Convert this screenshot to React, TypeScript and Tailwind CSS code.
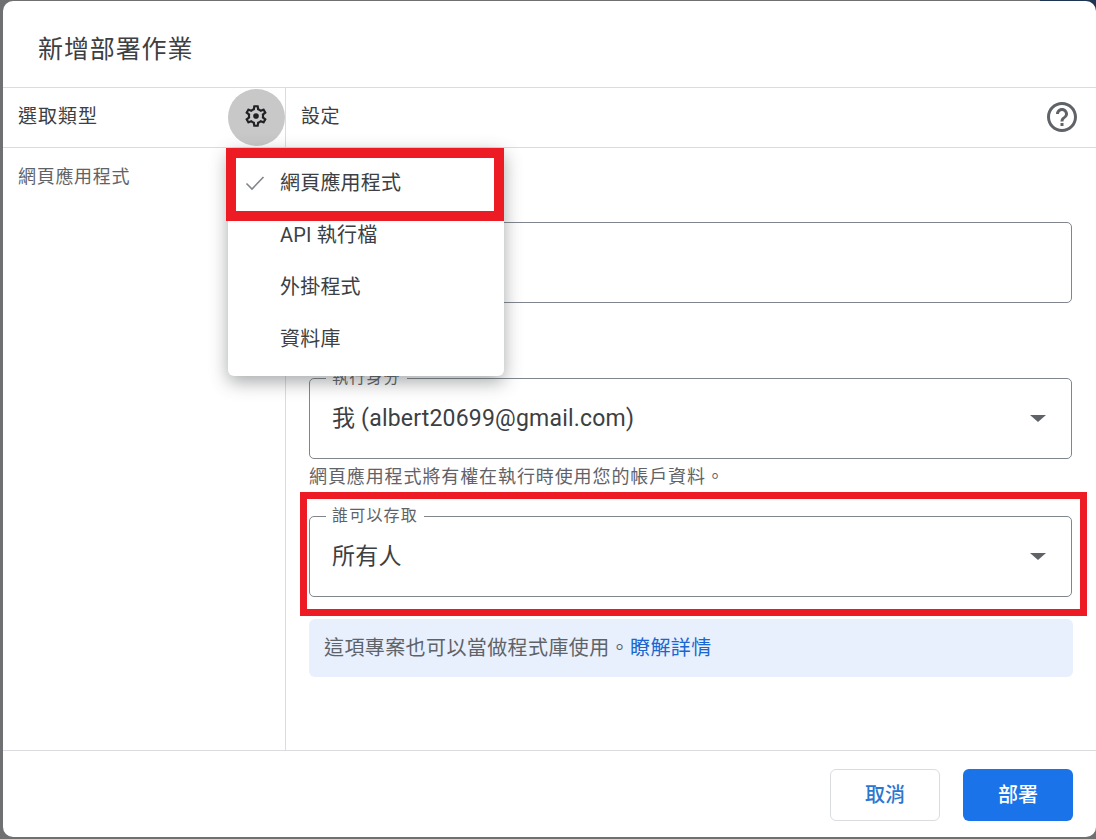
const menuItems = ['網頁應用程式', 'API 執行檔', '外掛程式', '資料庫'];

function GearIcon() {
  return (
    <svg viewBox="0 0 24 24" className="w-[26px] h-[26px]" fill="#202124">
      <path d="M19.43 12.98c.04-.32.07-.64.07-.98 0-.34-.03-.66-.07-.98l2.11-1.65c.19-.15.24-.42.12-.64l-2-3.46c-.09-.16-.26-.25-.44-.25-.06 0-.12.01-.17.03l-2.49 1c-.52-.4-1.08-.73-1.69-.98l-.38-2.65C14.46 2.18 14.25 2 14 2h-4c-.25 0-.46.18-.49.42l-.38 2.65c-.61.25-1.17.59-1.69.98l-2.49-1c-.06-.02-.12-.03-.18-.03-.17 0-.34.09-.43.25l-2 3.46c-.13.22-.07.49.12.64l2.11 1.65c-.04.32-.07.65-.07.98 0 .33.03.66.07.98l-2.11 1.65c-.19.15-.24.42-.12.64l2 3.46c.09.16.26.25.44.25.06 0 .12-.01.17-.03l2.49-1c.52.4 1.08.73 1.69.98l.38 2.65c.03.24.24.42.49.42h4c.25 0 .46-.18.49-.42l.38-2.65c.61-.25 1.17-.59 1.69-.98l2.49 1c.06.02.12.03.18.03.17 0 .34-.09.43-.25l2-3.46c.12-.22.07-.49-.12-.64l-2.11-1.65zm-1.98-1.71c.04.31.05.52.05.73 0 .21-.02.43-.05.73l-.14 1.13.89.7 1.08.84-.7 1.21-1.27-.51-1.04-.42-.9.68c-.43.32-.84.56-1.25.73l-1.06.43-.16 1.13-.2 1.35h-1.4l-.19-1.35-.16-1.13-1.06-.43c-.43-.18-.83-.41-1.23-.71l-.91-.7-1.06.43-1.27.51-.7-1.21 1.08-.84.89-.7-.14-1.13c-.03-.31-.05-.54-.05-.74s.02-.43.05-.73l.14-1.13-.89-.7-1.08-.84.7-1.21 1.27.51 1.04.42.9-.68c.43-.32.84-.56 1.25-.73l1.06-.43.16-1.13.2-1.35h1.39l.19 1.35.16 1.13 1.06.43c.43.18.83.41 1.23.71l.91.7 1.06-.43 1.27-.51.7 1.21-1.07.85-.89.7.14 1.13z" />
      <circle cx="12" cy="12" r="2.6" />
    </svg>
  );
}

function HelpIcon() {
  return (
    <svg viewBox="0 0 24 24" className="w-9 h-9" fill="#5f6368">
      <path d="M11 18h2v-2h-2v2zm1-16C6.48 2 2 6.48 2 12s4.48 10 10 10 10-4.48 10-10S17.52 2 12 2zm0 18c-4.41 0-8-3.59-8-8s3.59-8 8-8 8 3.59 8 8-3.59 8-8 8zm0-14c-2.21 0-4 1.79-4 4h2c0-1.1.9-2 2-2s2 .9 2 2c0 2-3 1.75-3 5h2c0-2.25 3-2.5 3-5 0-2.21-1.79-4-4-4z" />
    </svg>
  );
}

function SelectField({ label, value }: { label: string; value: string }) {
  return (
    <div className="relative h-[81px] border border-[#80868b] rounded-[5px] flex items-center justify-between pl-[22px] pr-[25px]">
      <span className="absolute -top-[9px] left-[16px] bg-white px-[6px] text-[16px] leading-4 tracking-[1.2px] text-[#5f6368]">{label}</span>
      <span className="text-[23px] tracking-[0.2px] text-[#3c4043] leading-7">{value}</span>
      <span className="w-0 h-0 border-x-[8px] border-x-transparent border-t-[7px] border-t-[#5f6368]" />
    </div>
  );
}

export default function App() {
  return (
    <div className="relative w-[1096px] h-[839px] bg-[#6f7072] pl-[3px] pt-px pb-[2px] overflow-hidden font-['Roboto','Noto_Sans_CJK_TC',sans-serif]">
      <div className="absolute top-0 right-0 w-14 h-3 bg-[#1d3550]" />

      <div className="relative h-full bg-white rounded-[10px] flex flex-col">
        <div className="h-[87px] shrink-0 border-b border-[#dadce0] flex items-center pl-[35px] pt-[12px]">
          <h1 className="text-[25px] font-normal tracking-[0.9px] text-[#3c4043]">新增部署作業</h1>
        </div>

        <div className="flex-1 flex min-h-0">
          <div className="w-[283px] shrink-0 border-r border-[#dadce0]">
            <div className="h-[60px] border-b border-[#dadce0] flex items-center pl-[15px] pb-[1px] text-[19px] tracking-[1px] text-[#3c4043]">
              選取類型
            </div>
            <div className="pl-[15px] pt-[17px] text-[18px] tracking-[0.7px] leading-6 text-[#5f6368]">網頁應用程式</div>
          </div>

          <div className="flex-1 min-w-0">
            <div className="h-[60px] border-b border-[#dadce0] flex items-center justify-between pl-[15px] pr-[16px] pb-[1px] text-[19px] tracking-[0.6px] text-[#3c4043]">
              <span>設定</span>
              <HelpIcon />
            </div>
            <div className="pl-[23px] pr-[23px] pt-[74px]">
              <div className="mr-px">
                <div className="h-[81px] border border-[#80868b] rounded-[5px]" />
                <div className="mt-[75px]">
                  <SelectField label="執行身分" value="我 (albert20699@gmail.com)" />
                </div>
                <p className="mt-[6px] text-[18px] leading-6 tracking-[0.9px] text-[#5f6368]">網頁應用程式將有權在執行時使用您的帳戶資料。</p>
                <div className="mt-[27px]">
                  <SelectField label="誰可以存取" value="所有人" />
                </div>
              </div>
              <div className="mt-[22px] h-[58px] rounded-[6px] bg-[#e8f0fd] flex items-center pl-[15px] pb-[1px] text-[20px] tracking-[0.4px] text-[#5f6368]">
                這項專案也可以當做程式庫使用。<span className="text-[#1967d2]">瞭解詳情</span>
              </div>
            </div>
          </div>
        </div>

        <div className="h-[87px] shrink-0 border-t border-[#dadce0] flex items-start justify-end gap-[23px] pt-[18px] pr-[23px]">
          <button className="w-[110px] h-[52px] rounded-[6px] border border-[#dadce0] bg-white text-[20px] font-medium text-[#2b77d0]">取消</button>
          <button className="w-[110px] h-[52px] rounded-[6px] bg-[#1a73e8] text-[20px] font-medium text-white">部署</button>
        </div>

        {/* gear button sits over the sidebar header */}
        <div className="absolute left-[225px] top-[88px] w-[57px] h-[57px] rounded-full bg-[#c8c8c8] flex items-center justify-center pb-[3px] pr-[2px]">
          <GearIcon />
        </div>

        {/* dropdown menu */}
        <div className="absolute left-[225px] top-[147px] w-[276px] h-[228px] bg-white rounded-[6px] shadow-[0_6px_18px_rgba(60,64,67,0.45)] pt-[9px]">
          {menuItems.map((item, i) => (
            <div key={item} className="h-[52px] flex items-center pl-[52px] text-[20px] tracking-[0.2px] text-[#3c4043]">
              {i === 0 && (
                <svg viewBox="0 0 20 16" className="absolute left-[17px] w-5 h-4" fill="none" stroke="#80868b" strokeWidth="1.6">
                  <path d="M1.5 8.5 L7 14 L18.5 2" />
                </svg>
              )}
              {item}
            </div>
          ))}
        </div>

        {/* red annotation boxes drawn on top of the screenshot */}
        <div className="absolute left-[223px] top-[147px] w-[278px] h-[73px] border-[10px] border-[#ed1c24] pointer-events-none" />
        <div className="absolute left-[297px] top-[491px] w-[787px] h-[124px] border-[7px] border-[#ed1c24] pointer-events-none" />
      </div>
    </div>
  );
}
